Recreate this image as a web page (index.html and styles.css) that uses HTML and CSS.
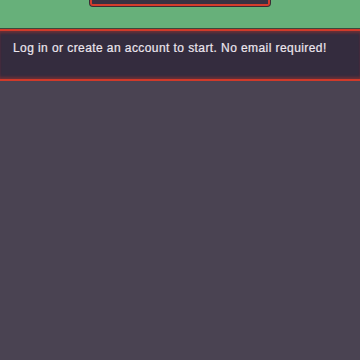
FILE: index.html
```html
<!DOCTYPE html>
<html>
<head>
<meta charset="utf-8">
<link rel="stylesheet" href="styles.css">
</head>
<body>
<div class="top">
  <div class="btn"></div>
</div>
<div class="banner">
  <p class="msg">Log in or create an account to start. No email required!</p>
</div>
<div class="rest"></div>
</body>
</html>
```
FILE: styles.css
```css
html, body {
  margin: 0;
  padding: 0;
  background: #4a4352;
  width: 360px;
  height: 360px;
  overflow: hidden;
}
.top {
  height: 28px;
  background: #67b07a;
  display: flex;
  justify-content: center;
  border-bottom: 1px solid #3a4a3c;
}
.btn {
  width: 176px;
  height: 4px;
  background: #3a3142;
  border: 2px solid #d43c2c;
  border-top: none;
  border-radius: 0 0 3px 3px;
  box-shadow: 0 0 0 1px #3a2c34;
}
.banner {
  background: #342c3e;
  border-top: 2px solid #d03a2a;
  border-bottom: 2px solid #d03a2a;
  box-shadow: inset 0 3px 3px -1px rgba(208,58,42,0.35), inset 0 -3px 3px -1px rgba(208,58,42,0.35);
  height: 48px;
  display: flex;
  align-items: flex-start;
}
.msg {
  margin: 10px 0 0 13px;
  font-family: "Liberation Sans", sans-serif;
  font-size: 12px;
  line-height: 14px;
  color: #ece6ee;
  letter-spacing: 0.42px;
  -webkit-text-stroke: 0.2px #ece6ee;
}
.rest {
  height: 280px;
}
```
